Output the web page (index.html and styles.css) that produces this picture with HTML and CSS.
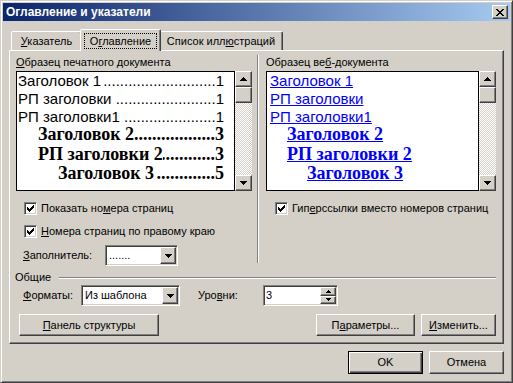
FILE: index.html
```html
<!DOCTYPE html>
<html lang="ru">
<head>
<meta charset="utf-8">
<title>Оглавление и указатели</title>
<link rel="stylesheet" href="styles.css">
</head>
<body>
<div class="window">
    <div class="titlebar">
        <span class="title">Оглавление и указатели</span>
        <span class="raised close-btn">
            <svg width="8" height="7" viewBox="0 0 8 7"><path d="M0 0h2v1H0zM6 0h2v1H6zM1 1h2v1H1zM5 1h2v1H5zM2 2h4v1H2zM3 3h2v1H3zM2 4h4v1H2zM1 5h2v1H1zM5 5h2v1H5zM0 6h2v1H0zM6 6h2v1H6z"/></svg>
        </span>
    </div>

    <div class="client">
        <div class="tabs">
            <div class="tab tab-index"><u>У</u>казатель</div>
            <div class="tab tab-toc active"><span class="focus">О<u>г</u>лавление</span></div>
            <div class="tab tab-figures">Список илл<u>ю</u>страций</div>
        </div>

        <div class="panel">
            <div class="previews">
                <div class="col-print">
                    <div class="caption"><u>О</u>бразец печатного документа</div>
                    <div class="preview">
                        <div class="sheet print">
                            <div class="entry sans"><span class="name">Заголовок 1</span><span class="dots gap"></span><span>1</span></div>
                            <div class="entry sans"><span class="name">РП заголовки</span><span class="dots gap"></span><span>1</span></div>
                            <div class="entry sans"><span class="name">РП заголовки1</span><span class="dots gap"></span><span>1</span></div>
                            <div class="entry serif lv2"><span class="name">Заголовок 2</span><span class="dots"></span><span>3</span></div>
                            <div class="entry serif lv2"><span class="name">РП заголовки 2</span><span class="dots"></span><span>3</span></div>
                            <div class="entry serif lv3"><span class="name">Заголовок 3</span><span class="dots gap"></span><span>5</span></div>
                        </div>
                        <div class="scrollbar">
                            <div class="raised sb-btn"><svg width="7" height="4" viewBox="0 0 7 4"><path d="M3 0h1v1h1v1h1v1h1v1H0V3h1V2h1V1h1z"/></svg></div>
                            <div class="raised thumb"></div>
                            <div class="track"></div>
                            <div class="raised sb-btn"><svg width="7" height="4" viewBox="0 0 7 4"><path d="M0 0h7v1H6v1H5v1H4v1H3V3H2V2H1V1H0z"/></svg></div>
                        </div>
                    </div>
                    <div class="check">
                        <span class="box"><svg width="7" height="7" viewBox="0 0 7 7"><path d="M6 0h1v1H6zM5 1h2v1H5zM0 2h1v1H0zM4 2h3v1H4zM0 3h2v1H0zM3 3h3v1H3zM0 4h5v1H0zM1 5h3v1H1zM2 6h1v1H2z"/></svg></span>
                        <span>Показать но<u>м</u>ера страниц</span>
                    </div>
                    <div class="check">
                        <span class="box"><svg width="7" height="7" viewBox="0 0 7 7"><path d="M6 0h1v1H6zM5 1h2v1H5zM0 2h1v1H0zM4 2h3v1H4zM0 3h2v1H0zM3 3h3v1H3zM0 4h5v1H0zM1 5h3v1H1zM2 6h1v1H2z"/></svg></span>
                        <span><u>Н</u>омера страниц по правому краю</span>
                    </div>
                    <div class="field-row">
                        <span class="field-label leader-label"><u>З</u>аполнитель:</span>
                        <div class="combo leader-combo">
                            <span class="value">.......</span>
                            <span class="raised drop"><svg width="7" height="4" viewBox="0 0 7 4"><path d="M0 0h7v1H6v1H5v1H4v1H3V3H2V2H1V1H0z"/></svg></span>
                        </div>
                    </div>
                </div>

                <div class="sep"></div>

                <div class="col-web">
                    <div class="caption">Образец ве<u>б</u>-документа</div>
                    <div class="preview">
                        <div class="sheet web">
                            <div class="entry sans"><span class="link">Заголовок 1</span></div>
                            <div class="entry sans"><span class="link">РП заголовки</span></div>
                            <div class="entry sans"><span class="link">РП заголовки1</span></div>
                            <div class="entry serif lv2"><span class="link">Заголовок 2</span></div>
                            <div class="entry serif lv2"><span class="link">РП заголовки 2</span></div>
                            <div class="entry serif lv3"><span class="link">Заголовок 3</span></div>
                        </div>
                        <div class="scrollbar">
                            <div class="raised sb-btn"><svg width="7" height="4" viewBox="0 0 7 4"><path d="M3 0h1v1h1v1h1v1h1v1H0V3h1V2h1V1h1z"/></svg></div>
                            <div class="raised thumb"></div>
                            <div class="track"></div>
                            <div class="raised sb-btn"><svg width="7" height="4" viewBox="0 0 7 4"><path d="M0 0h7v1H6v1H5v1H4v1H3V3H2V2H1V1H0z"/></svg></div>
                        </div>
                    </div>
                    <div class="check web-check">
                        <span class="box"><svg width="7" height="7" viewBox="0 0 7 7"><path d="M6 0h1v1H6zM5 1h2v1H5zM0 2h1v1H0zM4 2h3v1H4zM0 3h2v1H0zM3 3h3v1H3zM0 4h5v1H0zM1 5h3v1H1zM2 6h1v1H2z"/></svg></span>
                        <span>Гип<u>е</u>рссылки вместо номеров страниц</span>
                    </div>
                </div>
            </div>

            <div class="group">
                <span>Общие</span>
                <span class="etched"></span>
            </div>

            <div class="field-row formats-row">
                <span class="field-label formats-label"><u>Ф</u>орматы:</span>
                <div class="combo formats-combo">
                    <span class="value">Из шаблона</span>
                    <span class="raised drop"><svg width="7" height="4" viewBox="0 0 7 4"><path d="M0 0h7v1H6v1H5v1H4v1H3V3H2V2H1V1H0z"/></svg></span>
                </div>
                <span class="field-label levels-label">Уро<u>в</u>ни:</span>
                <div class="combo spin">
                    <span class="value">3</span>
                    <span class="spin-btns">
                        <span class="raised"><svg width="5" height="3" viewBox="0 0 5 3"><path d="M2 0h1v1h1v1h1v1H0V2h1V1h1z"/></svg></span>
                        <span class="raised"><svg width="5" height="3" viewBox="0 0 5 3"><path d="M0 0h5v1H4v1H3v1H2V2H1V1H0z"/></svg></span>
                    </span>
                </div>
            </div>

            <div class="button-row">
                <div class="raised button outline-btn"><u>П</u>анель структуры</div>
                <div class="right-buttons">
                    <div class="raised button options-btn">П<u>а</u>раметры...</div>
                    <div class="raised button modify-btn"><u>И</u>зменить...</div>
                </div>
            </div>
        </div>

        <div class="footer">
            <div class="raised button default">OK</div>
            <div class="raised button">Отмена</div>
        </div>
    </div>
</div>
</body>
</html>
```

FILE: styles.css
```css
* {
    margin: 0;
    padding: 0;
    box-sizing: border-box;
}

html,
body {
    width: 513px;
    height: 383px;
    overflow: hidden;
}

body {
    background: #d4d0c8;
    font-family: "Liberation Sans", Arial, sans-serif;
    font-size: 11px;
    line-height: 13px;
    color: #000;
}

svg {
    display: block;
    fill: #000;
}

/* window frame */
.window {
    width: 513px;
    height: 383px;
    background: #d4d0c8;
    border: 1px solid;
    border-color: #d4d0c8 #404040 #404040 #d4d0c8;
    box-shadow: inset 1px 1px #fff, inset -1px -1px #808080;
    padding: 2px;
}

.titlebar {
    height: 18px;
    display: flex;
    align-items: center;
    padding: 0 2px 0 3px;
    background: linear-gradient(to right, #0a246a, #a6caf0);
    color: #fff;
    font-size: 12px;
    font-weight: bold;
}

.titlebar .title {
    flex: 1;
}

.raised {
    background: #d4d0c8;
    border: 1px solid;
    border-color: #fff #404040 #404040 #fff;
    box-shadow: inset -1px -1px #808080;
    display: flex;
    align-items: center;
    justify-content: center;
}

.close-btn {
    width: 16px;
    height: 14px;
}

.client {
    padding: 0 6px;
}

/* tabs */
.tabs {
    display: flex;
    align-items: flex-end;
    height: 29px;
    padding-left: 2px;
}

.tab {
    height: 19px;
    padding-top: 3px;
    background: #d4d0c8;
    border: 1px solid;
    border-bottom: 0;
    border-color: #fff #404040 transparent #fff;
    border-radius: 2px 2px 0 0;
    box-shadow: inset -1px 0 #808080;
    text-align: center;
}

.tab-index {
    width: 71px;
}

.tab-toc {
    width: 81px;
}

.tab-figures {
    width: 124px;
}

.tab.active {
    position: relative;
    z-index: 1;
    height: 22px;
    margin: 0 -2px -1px;
    padding: 3px 3px 0;
}

.focus {
    display: block;
    height: 16px;
    line-height: 14px;
    border: 1px dotted #000;
}

/* panel */
.panel {
    height: 294px;
    border: 1px solid;
    border-color: #fff #404040 #404040 #fff;
    box-shadow: inset -1px -1px #808080;
    padding: 5px 7px 0 6px;
}

.previews {
    display: flex;
}

.col-print {
    width: 236px;
}

.col-web {
    flex: 1;
}

.sep {
    width: 2px;
    height: 208px;
    margin: -1px 7px 0 5px;
    border-left: 1px solid #808080;
    border-right: 1px solid #fff;
}

.caption {
    height: 13px;
    margin-bottom: 2px;
    white-space: nowrap;
}

.preview {
    display: flex;
    height: 120px;
}

.sheet {
    flex: 1;
    background: #fff;
    border: 1px solid #000;
    overflow: hidden;
}

.sheet.print {
    padding: 0 10px 0 1px;
}

.sheet.web {
    padding: 0 0 0 3px;
}

.entry {
    display: flex;
    white-space: nowrap;
}

.sans {
    font: 15px/18px "Liberation Sans", Arial, sans-serif;
}

.serif {
    font: bold 18px/19.5px "Liberation Serif", "Times New Roman", serif;
}

.sans + .serif {
    margin-top: -1px;
}

.print .lv2 {
    padding-left: 20px;
}

.print .lv3 {
    padding-left: 40px;
}

.web .lv2 {
    padding-left: 17px;
}

.web .lv3 {
    padding-left: 37px;
}

.dots {
    flex: 1;
    overflow: hidden;
    direction: rtl;
}

.dots::before {
    content: "................................................................";
}

.dots.gap {
    margin-left: 3px;
}

.link {
    color: #0000ff;
    text-decoration: underline;
}

/* scrollbar */
.scrollbar {
    width: 17px;
    display: flex;
    flex-direction: column;
}

.sb-btn,
.thumb {
    height: 16px;
}

.track {
    flex: 1;
    background: repeating-conic-gradient(#d4d0c8 0 25%, #fff 0 50%) 0 0 / 2px 2px;
}

/* checkboxes */
.check {
    display: flex;
    align-items: center;
    height: 13px;
    margin: 11px 0 0 8px;
    white-space: nowrap;
}

.check + .check {
    margin-top: 10px;
}

.web-check {
    margin-left: 9px;
}

.box {
    width: 13px;
    height: 13px;
    margin-right: 4px;
    background: #fff;
    border: 1px solid;
    border-color: #808080 #fff #fff #808080;
    box-shadow: inset 1px 1px #404040, inset -1px -1px #d4d0c8;
    display: flex;
    align-items: center;
    justify-content: center;
}

/* fields */
.field-row {
    display: flex;
    align-items: center;
    margin-top: 7px;
}

.field-label {
    white-space: nowrap;
}

.leader-label {
    width: 82px;
    margin-left: 7px;
}

.combo {
    display: flex;
    height: 21px;
    padding: 1px;
    background: #fff;
    border: 1px solid;
    border-color: #808080 #fff #fff #808080;
    box-shadow: inset 1px 1px #404040, inset -1px -1px #d4d0c8;
}

.combo .value {
    flex: 1;
    padding-left: 2px;
    line-height: 17px;
    white-space: nowrap;
}

.combo .drop {
    width: 16px;
}

.leader-combo {
    width: 73px;
}

.formats-row {
    margin-top: 1px;
}

.formats-label {
    width: 58px;
    margin-left: 7px;
}

.formats-combo {
    width: 99px;
}

.levels-label {
    width: 65px;
    margin-left: 18px;
}

.spin {
    width: 75px;
}

.spin .value {
    padding-left: 1px;
}

.spin-btns {
    width: 16px;
    display: flex;
    flex-direction: column;
}

.spin-btns .raised {
    flex: 1;
}

/* group box heading */
.group {
    display: flex;
    align-items: center;
    height: 13px;
    margin: 5px 0 0 -1px;
}

.etched {
    flex: 1;
    height: 2px;
    margin-left: 8px;
    border-top: 1px solid #808080;
    border-bottom: 1px solid #fff;
}

/* buttons */
.button {
    height: 22px;
    white-space: nowrap;
}

.button-row {
    display: flex;
    margin-top: 8px;
}

.outline-btn {
    width: 140px;
    margin-left: 3px;
}

.right-buttons {
    display: flex;
    gap: 6px;
    margin-left: auto;
}

.options-btn {
    width: 99px;
}

.modify-btn {
    width: 75px;
}

.footer {
    display: flex;
    justify-content: flex-end;
    gap: 6px;
    margin-top: 7px;
}

.footer .button {
    width: 75px;
    height: 23px;
}

.footer .default {
    border-color: #000;
    box-shadow: inset 1px 1px #fff, inset -1px -1px #404040, inset -2px -2px #808080;
}
```
